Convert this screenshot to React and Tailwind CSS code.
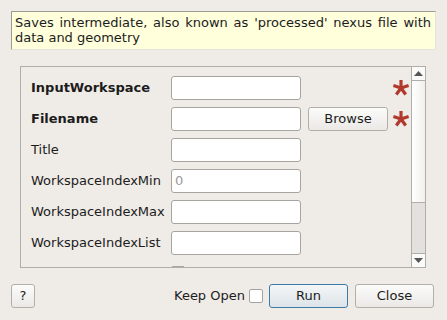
import React from 'react';

const rows = [
  { label: 'InputWorkspace', bold: true, required: true },
  { label: 'Filename', bold: true, required: true, browse: true },
  { label: 'Title' },
  { label: 'WorkspaceIndexMin', placeholder: '0' },
  { label: 'WorkspaceIndexMax' },
  { label: 'WorkspaceIndexList' },
];

const Asterisk = () => (
  <svg width="18" height="18" viewBox="0 0 18 18" className="block">
    <g stroke="#b0392b" strokeWidth="3.2" strokeLinecap="butt">
      <line x1="9" y1="9" x2="9" y2="1" />
      <line x1="9" y1="9" x2="16.6" y2="6.5" />
      <line x1="9" y1="9" x2="13.7" y2="15.5" />
      <line x1="9" y1="9" x2="4.3" y2="15.5" />
      <line x1="9" y1="9" x2="1.4" y2="6.5" />
    </g>
  </svg>
);

const TextBox = ({ placeholder }) => (
  <div className="w-[130px] h-[24px] bg-white border border-[#a8a5a0] rounded-[3px] flex items-center px-[3px] text-[#9a9a9a]">
    {placeholder}
  </div>
);

const Button = ({ children, className = '' }) => (
  <div
    className={`h-[24px] flex items-center justify-center rounded-[3px] border border-[#b2aea8] bg-gradient-to-b from-[#fbfbfa] to-[#ebe9e6] ${className}`}
  >
    {children}
  </div>
);

export default function App() {
  return (
    <div
      className="w-[447px] h-[320px] bg-[#efebe7] text-[13px] text-[#1c1c1c] flex flex-col overflow-hidden"
      style={{ fontFamily: '"DejaVu Sans", sans-serif' }}
    >
      <div className="mt-[11px] ml-[11px] w-[425px] h-[39px] bg-[#ffffdc] border-t border-l border-[#9c9a96] border-r border-b border-r-[#e4e2dc] border-b-[#e4e2dc] pl-[3px] pr-[4px] pt-[3px] leading-[15px] whitespace-nowrap">
        <div className="text-justify [text-align-last:justify]">
          Saves intermediate, also known as 'processed' nexus file with
        </div>
        <div>data and geometry</div>
      </div>

      <div className="mt-[16px] ml-[20px] w-[406px] h-[202px] border border-[#b1aea9] flex overflow-hidden">
        <div className="flex-1 pt-[9px] pl-[10px] flex flex-col gap-[7px]">
          {rows.map((r) => (
            <div key={r.label} className="flex items-center h-[24px] shrink-0">
              <div className={`w-[140px] ${r.bold ? 'font-bold' : ''}`}>{r.label}</div>
              <TextBox placeholder={r.placeholder} />
              {r.browse && <Button className="ml-[7px] w-[80px]">Browse</Button>}
              {r.required && (
                <div className={r.browse ? 'ml-[4px]' : 'ml-[91px]'}>
                  <Asterisk />
                </div>
              )}
            </div>
          ))}
          <div className="flex h-[24px] shrink-0">
            <div className="w-[140px]" />
            <div className="mt-[4px] w-[14px] h-[14px] bg-white border border-[#a8a5a0] rounded-[2px]" />
          </div>
        </div>

        <div className="w-[14px] border-l border-[#b1aea9] flex flex-col">
          <div className="h-[14px] border-b border-[#b1aea9] bg-[#fafaf9] flex items-center justify-center">
            <svg width="9" height="5" viewBox="0 0 9 5"><polygon points="4.5,0 9,5 0,5" fill="#555" /></svg>
          </div>
          <div className="h-[122px] bg-gradient-to-r from-[#ffffff] to-[#f1f0ee] border-b border-[#b1aea9]" />
          <div className="flex-1 bg-[#e2e1de]" />
          <div className="h-[14px] border-t border-[#b1aea9] bg-[#fafaf9] flex items-center justify-center">
            <svg width="9" height="5" viewBox="0 0 9 5"><polygon points="0,0 9,0 4.5,5" fill="#555" /></svg>
          </div>
        </div>
      </div>

      <div className="mt-[16px] flex items-center pl-[11px]">
        <Button className="w-[24px]">?</Button>
        <div className="ml-[139px]">Keep Open</div>
        <div className="ml-[4px] w-[14px] h-[14px] bg-white border border-[#a8a5a0] rounded-[2px]" />
        <div className="ml-[6px] w-[79px] h-[24px] flex items-center justify-center rounded-[3px] border border-[#3c7aa8] bg-gradient-to-b from-[#f4f6f8] to-[#dde3e8]">
          Run
        </div>
        <Button className="ml-[7px] w-[79px]">Close</Button>
      </div>
    </div>
  );
}
